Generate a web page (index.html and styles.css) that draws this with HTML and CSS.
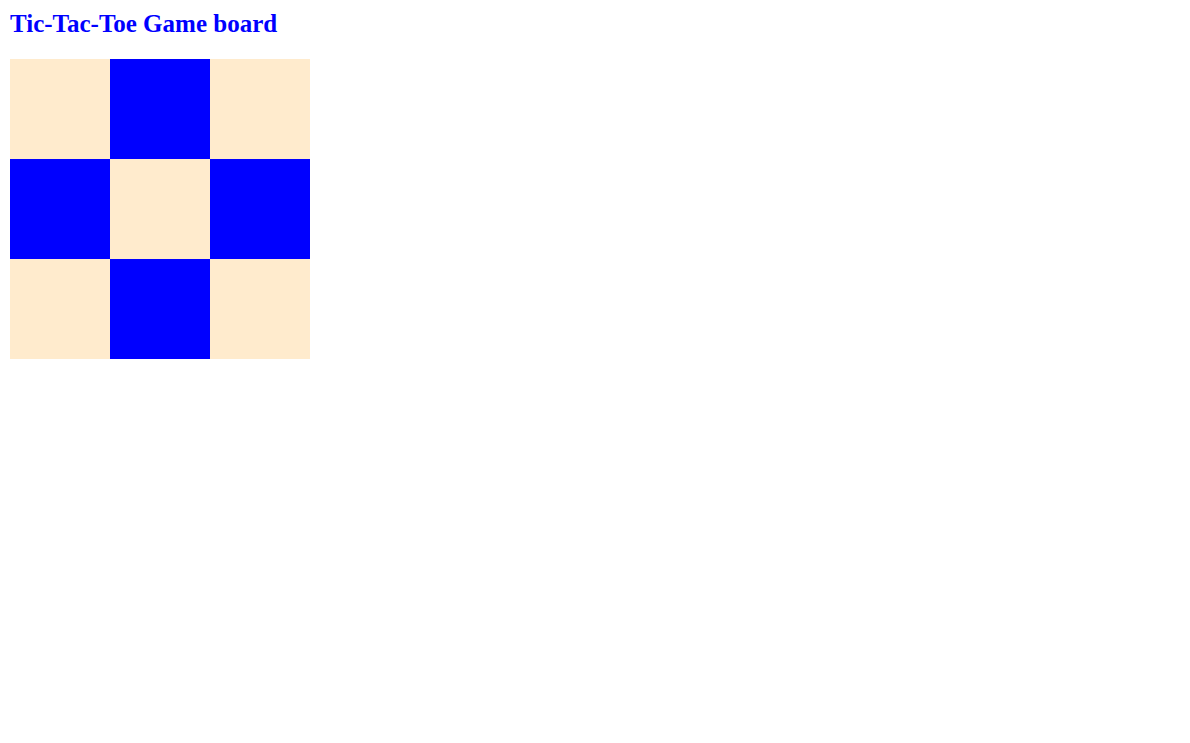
FILE: index.html
```html
<!DOCTYPE html>
<html>
<head>
<meta charset="utf-8">
<link rel="stylesheet" href="styles.css">
</head>
<body>
<h2 class="title">Tic-Tac-Toe Game board</h2>
<div class="board">
  <div class="cell light"></div>
  <div class="cell dark"></div>
  <div class="cell light"></div>
  <div class="cell dark"></div>
  <div class="cell light"></div>
  <div class="cell dark"></div>
  <div class="cell light"></div>
  <div class="cell dark"></div>
  <div class="cell light"></div>
</div>
</body>
</html>
```
FILE: styles.css
```css
body {
  margin: 0;
  padding: 10px;
  background: #ffffff;
  font-family: "Liberation Serif", "Times New Roman", serif;
}
.title {
  margin: 0 0 21px 0;
  font-size: 25px;
  font-weight: bold;
  color: #0000ff;
}
.board {
  display: grid;
  grid-template-columns: repeat(3, 100px);
  grid-template-rows: repeat(3, 100px);
  width: 300px;
}
.light { background: #ffebcd; }
.dark { background: #0000ff; }
```
